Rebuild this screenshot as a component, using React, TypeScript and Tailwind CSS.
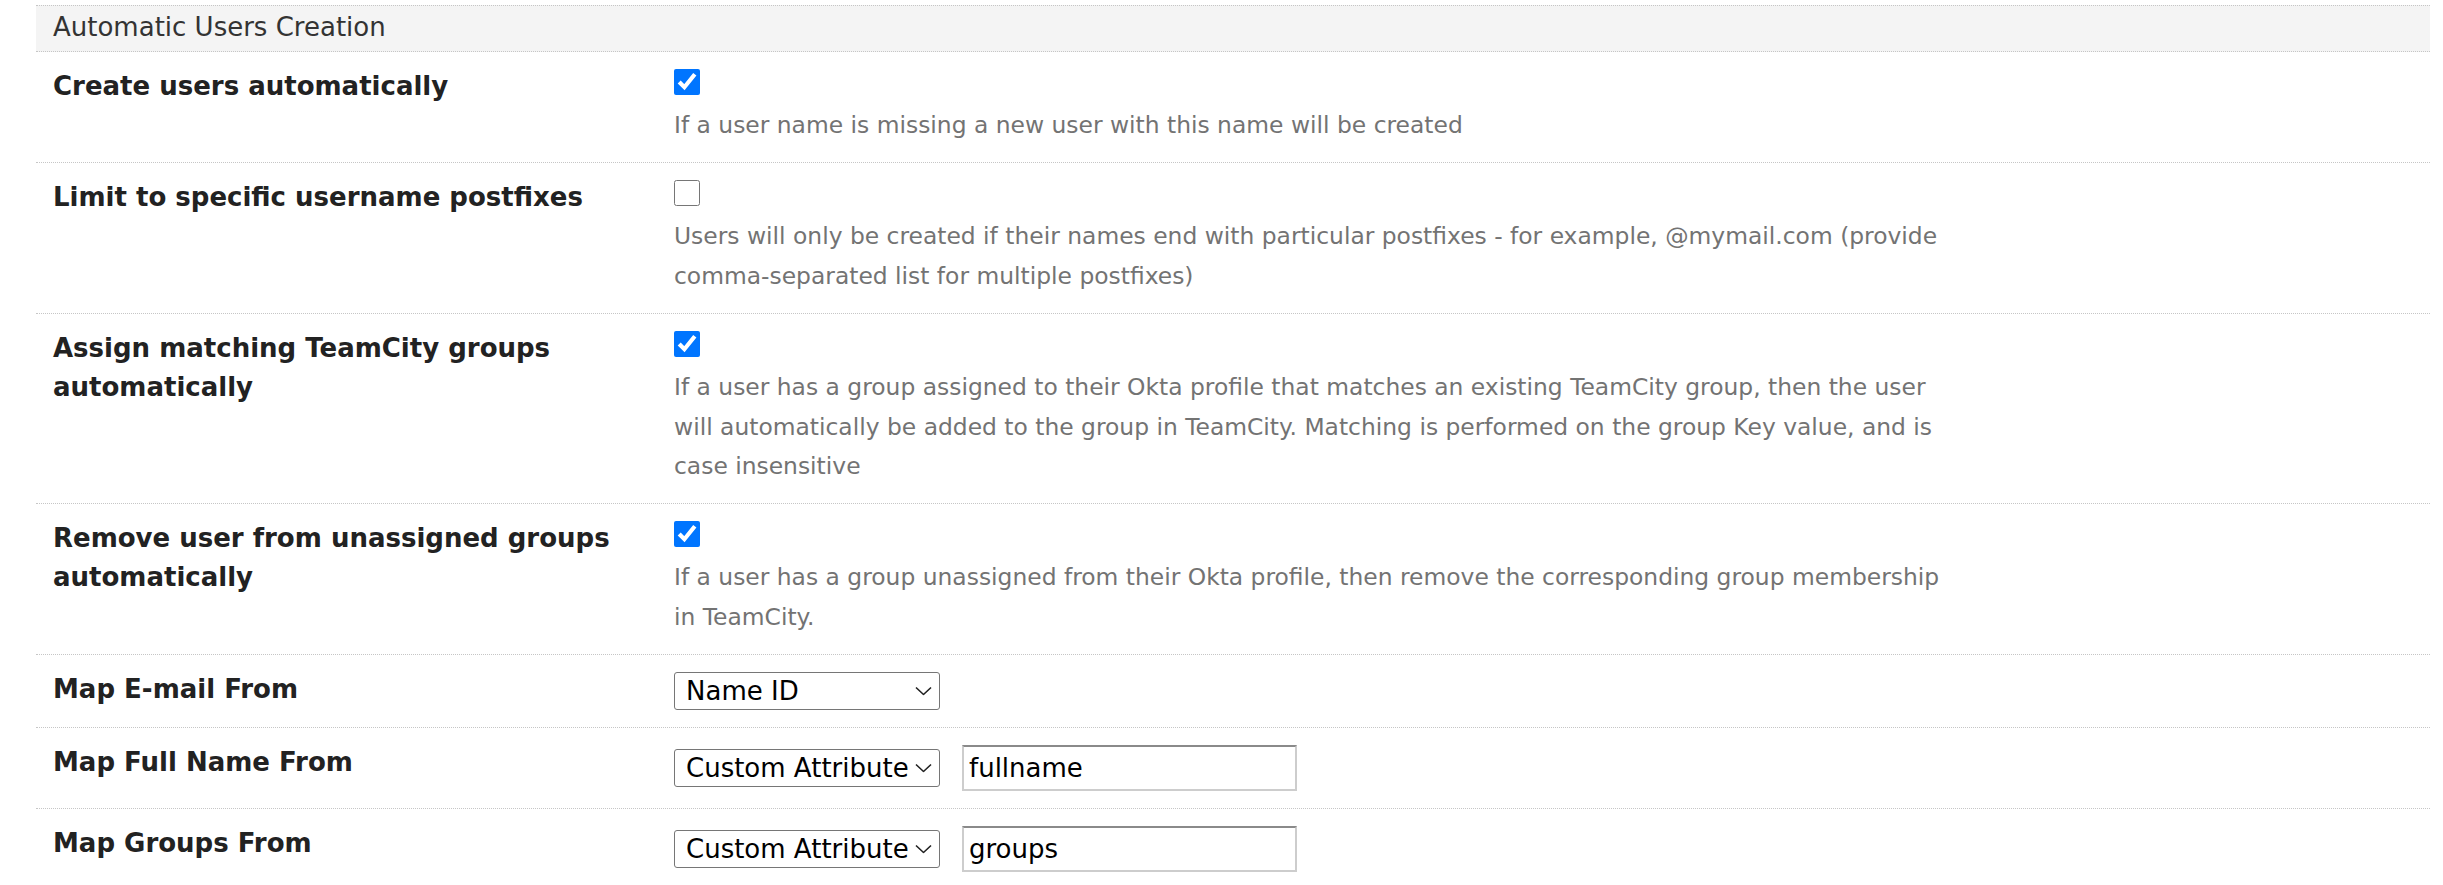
import { ReactNode } from 'react';

const FONT = { fontFamily: '"DejaVu Sans", "Noto Sans", sans-serif' };

function Chevron() {
    return (
        <svg width="17" height="9" viewBox="0 0 17 9" className="pointer-events-none absolute right-[8px] top-1/2 -translate-y-1/2">
            <path d="M1 1 L8.5 8 L16 1" fill="none" stroke="#222" strokeWidth="1.6" />
        </svg>
    );
}

function Select({ value, options }: { value: string; options: string[] }) {
    return (
        <div className="relative h-[38px] w-[266px] shrink-0">
            <select
                defaultValue={value}
                className="h-full w-full appearance-none rounded-[3px] border border-[#767676] bg-white pl-[11px] text-[26px] leading-[36px] text-black"
                style={FONT}
            >
                {options.map((o) => (
                    <option key={o}>{o}</option>
                ))}
            </select>
            <Chevron />
        </div>
    );
}

function TextField({ value }: { value: string }) {
    return (
        <input
            type="text"
            defaultValue={value}
            className="h-[46px] w-[335px] border-2 border-[#cdcdcd] border-t-[#8a8a8a] bg-white pl-[5px] text-[26px] text-black outline-none"
            style={FONT}
        />
    );
}

function Row({ label, children }: { label: ReactNode; children: ReactNode }) {
    return (
        <div className="grid grid-cols-[638px_1fr] border-b border-dotted border-[#c6c6c6]">
            <div className="pl-[17px] pr-4 pt-[15px] text-[26px] font-bold leading-[39px] text-[#222]">{label}</div>
            <div className="py-[17px]">{children}</div>
        </div>
    );
}

function CheckRow({ label, checked, desc }: { label: string; checked: boolean; desc: string }) {
    return (
        <Row label={label}>
            <input type="checkbox" defaultChecked={checked} className="m-0 block h-[26px] w-[26px]" />
            <p className="mt-[11px] max-w-[1280px] text-[23.4px] leading-[39.4px] text-[#737373]">{desc}</p>
        </Row>
    );
}

const ATTR_OPTIONS = ['Name ID', 'Custom Attribute'];

export default function App() {
    return (
        <div className="min-h-screen bg-white pt-[5px]" style={FONT}>
            <div className="ml-[36px] w-[2394px]">
                <div className="border-y border-dotted border-[#c6c6c6] bg-[#f4f4f4] pb-[4px] pl-[17px] pt-[2px] text-[26px] leading-[39px] text-[#333]">
                    Automatic Users Creation
                </div>

                <CheckRow
                    label="Create users automatically"
                    checked
                    desc="If a user name is missing a new user with this name will be created"
                />
                <CheckRow
                    label="Limit to specific username postfixes"
                    checked={false}
                    desc="Users will only be created if their names end with particular postfixes - for example, @mymail.com (provide comma-separated list for multiple postfixes)"
                />
                <CheckRow
                    label="Assign matching TeamCity groups automatically"
                    checked
                    desc="If a user has a group assigned to their Okta profile that matches an existing TeamCity group, then the user will automatically be added to the group in TeamCity. Matching is performed on the group Key value, and is case insensitive"
                />
                <CheckRow
                    label="Remove user from unassigned groups automatically"
                    checked
                    desc="If a user has a group unassigned from their Okta profile, then remove the corresponding group membership in TeamCity."
                />

                <Row label="Map E-mail From">
                    <Select value="Name ID" options={ATTR_OPTIONS} />
                </Row>
                <Row label="Map Full Name From">
                    <div className="flex items-center gap-[22px]">
                        <Select value="Custom Attribute" options={ATTR_OPTIONS} />
                        <TextField value="fullname" />
                    </div>
                </Row>
                <Row label="Map Groups From">
                    <div className="flex items-center gap-[22px]">
                        <Select value="Custom Attribute" options={ATTR_OPTIONS} />
                        <TextField value="groups" />
                    </div>
                </Row>
            </div>
        </div>
    );
}
